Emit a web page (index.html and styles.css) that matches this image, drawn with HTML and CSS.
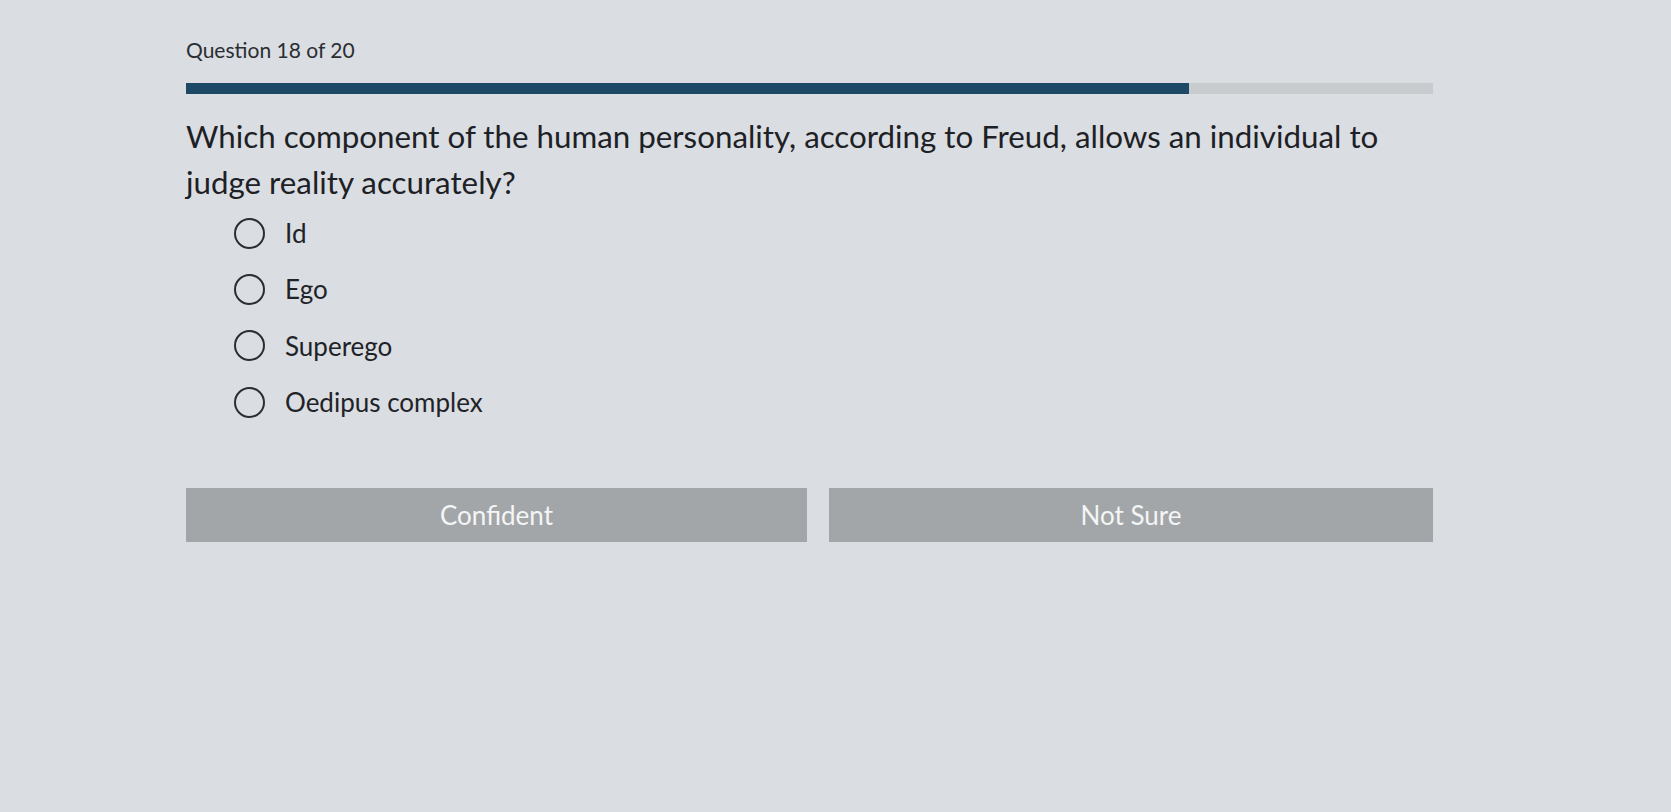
FILE: index.html
```html
<!DOCTYPE html>
<html lang="en">
<head>
<meta charset="utf-8">
<title>Question 18 of 20</title>
<link rel="stylesheet" href="styles.css">
</head>
<body>
<main class="quiz">
  <div class="counter">Question 18 of 20</div>
  <div class="progress"><div class="progress-fill"></div></div>
  <h1 class="question">Which component of the human personality, according to Freud, allows an individual to judge reality accurately?</h1>
  <ul class="options">
    <li class="option"><span class="radio"></span><span class="label">Id</span></li>
    <li class="option"><span class="radio"></span><span class="label">Ego</span></li>
    <li class="option"><span class="radio"></span><span class="label">Superego</span></li>
    <li class="option"><span class="radio"></span><span class="label">Oedipus complex</span></li>
  </ul>
  <div class="actions">
    <button class="btn btn-confident">Confident</button>
    <button class="btn">Not Sure</button>
  </div>
</main>
</body>
</html>
```
FILE: styles.css
```css
html, body {
  margin: 0;
  padding: 0;
  height: 100%;
}
body {
  background: #dadde1;
  font-family: "Lato", "Open Sans", sans-serif;
  color: #1f2327;
}
.quiz {
  width: 1247px;
  padding: 37px 0 0 186px;
}
.counter {
  font-size: 21px;
  line-height: 25px;
  color: #2a2e33;
}
.progress {
  margin-top: 21px;
  height: 11px;
  background: #c9ccce;
}
.progress-fill {
  width: 80.4%;
  height: 100%;
  background: #1c4a66;
}
.question {
  margin: 19px 0 0;
  font-weight: 400;
  font-size: 31.3px;
  line-height: 46px;
  color: #1d2125;
  max-width: 1230px;
}
.options {
  list-style: none;
  margin: 0;
  padding: 0 0 0 48px;
}
.option {
  display: flex;
  align-items: center;
  height: 56.3px;
  gap: 20px;
}
.radio {
  width: 27px;
  height: 27px;
  border: 2.5px solid #2a2d31;
  border-radius: 50%;
  flex: none;
}
.label {
  font-size: 26px;
  color: #1f2327;
}
.actions {
  margin-top: 58px;
  display: flex;
  gap: 22px;
}
.btn {
  flex: 1;
  height: 54px;
  border: none;
  background: #a3a6a8;
  color: #f4f5f6;
  font-family: "Lato", "Open Sans", sans-serif;
  font-size: 26px;
  padding: 0;
}
.btn-confident {
  flex: none;
  width: 621px;
}
```
